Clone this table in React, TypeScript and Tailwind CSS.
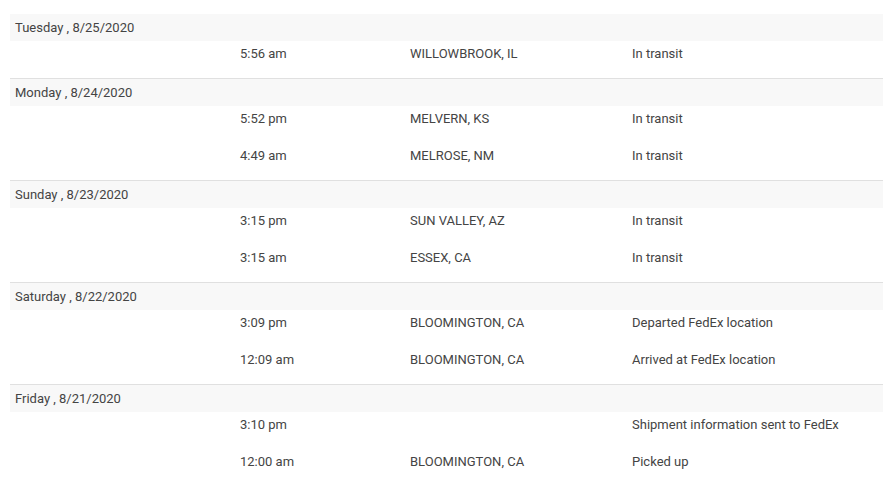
import React from "react";

type Scan = { time: string; location: string; status: string };
type Day = { label: string; scans: Scan[] };

const days: Day[] = [
  {
    label: "Tuesday , 8/25/2020",
    scans: [{ time: "5:56 am", location: "WILLOWBROOK, IL", status: "In transit" }],
  },
  {
    label: "Monday , 8/24/2020",
    scans: [
      { time: "5:52 pm", location: "MELVERN, KS", status: "In transit" },
      { time: "4:49 am", location: "MELROSE, NM", status: "In transit" },
    ],
  },
  {
    label: "Sunday , 8/23/2020",
    scans: [
      { time: "3:15 pm", location: "SUN VALLEY, AZ", status: "In transit" },
      { time: "3:15 am", location: "ESSEX, CA", status: "In transit" },
    ],
  },
  {
    label: "Saturday , 8/22/2020",
    scans: [
      { time: "3:09 pm", location: "BLOOMINGTON, CA", status: "Departed FedEx location" },
      { time: "12:09 am", location: "BLOOMINGTON, CA", status: "Arrived at FedEx location" },
    ],
  },
  {
    label: "Friday , 8/21/2020",
    scans: [
      { time: "3:10 pm", location: "", status: "Shipment information sent to FedEx" },
      { time: "12:00 am", location: "BLOOMINGTON, CA", status: "Picked up" },
    ],
  },
];

export default function App() {
  return (
    <div
      className="w-[883px] h-[482px] bg-white pt-[14px] pl-[10px] text-[13px] text-[#444444] overflow-hidden"
      style={{ fontFamily: "Roboto, 'Liberation Sans', sans-serif" }}
    >
      {days.map((day, i) => (
        <div key={day.label} className={i > 0 ? "border-t border-[#e0e0e0]" : ""}>
          <div className="h-[27px] bg-[#f8f8f8] pl-[5px] pt-[1px] flex items-center">{day.label}</div>
          {day.scans.map((s, j) => (
            <div key={j} className="h-[37px] grid grid-cols-[230px_170px_222px_1fr] leading-[26px]">
              <div />
              <div>{s.time}</div>
              <div>{s.location}</div>
              <div>{s.status}</div>
            </div>
          ))}
        </div>
      ))}
    </div>
  );
}
